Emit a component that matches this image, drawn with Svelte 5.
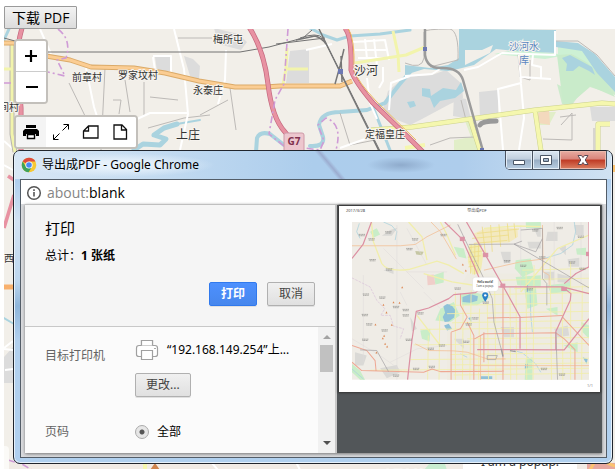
<script>
  const places = [
    [213, 43, '梅所屯'], [72, 81, '前章村'], [118, 79, '罗家坟村'], [193, 94, '永泰庄'],
    [365, 138, '定福皇庄'], [373, 478, '沙窝风力村'], [-1, 111, '间村'], [4, 262, '西小营']
  ];

  const yellowRows = [
    'M330 300 L744 292', 'M320 325 L744 318', 'M335 352 L744 345', 'M240 372 L744 366', 'M380 400 L744 396',
    'M220 418 L744 414', 'M330 447 L744 441', 'M210 462 L744 458', 'M330 478 L744 472', 'M90 494 L744 488',
    'M340 508 L744 503', 'M430 268 L744 262', 'M520 250 L744 244', 'M480 225 L744 219', 'M545 195 L740 190'
  ];
  const yellowColumns = [
    'M345 260 L345 522', 'M368 300 L366 522', 'M392 255 L388 522', 'M417 310 L414 522', 'M440 290 L444 522',
    'M462 240 L466 522', 'M508 245 L510 522', 'M526 240 L528 522', 'M556 200 L558 522', 'M580 180 L577 522',
    'M628 160 L632 522', 'M664 260 L666 522', 'M689 170 L689 522', 'M724 240 L722 522', 'M298 330 L296 522',
    'M264 390 L262 522'
  ];
  const districts = [
    'M410 85 L535 72 M395 100 L505 90 M400 115 L500 106 M425 65 L435 150 M450 60 L455 140 M475 58 L480 125 M500 55 L505 110 M520 55 L525 98',
    'M385 128 L425 122 M388 142 L430 137 M382 156 L420 152 M386 170 L415 167 M384 185 L412 181 M392 120 L390 205 M403 118 L402 208 M414 118 L412 200'
  ];
  const marks = [
    [66, 90], [95, 103], [145, 82], [225, 103], [208, 132], [98, 165], [147, 193], [78, 268], [127, 277],
    [168, 305], [75, 329], [88, 357], [134, 375], [76, 403], [197, 330], [241, 324], [310, 90], [352, 250],
    [272, 430], [305, 420], [206, 403], [405, 339], [385, 357], [378, 409], [228, 490], [275, 484], [168, 510],
    [610, 490], [664, 507], [548, 182], [568, 252], [657, 69], [720, 95], [605, 157], [694, 172], [725, 191],
    [584, 76], [500, 168], [436, 292], [197, 314]
  ];
  const peaks = [
    [186, 246], [160, 291], [178, 292], [139, 321], [155, 358], [106, 357], [132, 391], [128, 398],
    [135, 415], [141, 423], [109, 441], [130, 298], [367, 178], [376, 196]
  ];
</script>

<div class="app">
  <header><button class="download" type="button">下载 PDF</button></header>

  <main class="map">
    <svg class="tiles" viewBox="4 29 611 440" preserveAspectRatio="xMinYMin slice" aria-hidden="true">
      <rect x="4" y="29" width="611" height="440" fill="#f2efe9" />
      <rect x="4" y="462" width="611" height="8" fill="#f1ebe5" />
      <g fill="#dcdcdc">
        <path d="M214 28 L238 34 L247 42 L241 50 L218 44z M290 51 L309 49 V83 H286z M184 56 L193 59 L200 66 L199 79 L190 76z M155 57 H170 V71 H157z" />
        <path d="M405 77 L432 75 L446 70 L462 84 L463 98 L450 104 L422 119 L410 125 L392 118 L383 109 L388 91z M479 92 L498 90 V115 L480 118z M454 97 L466 99 L471 119 L453 116z M590 107 H615 V121 H592z M4 357 L13 347 V383 H4z" />
      </g>
      <path d="M557 84 L568 90 L598 62 L615 86 V95 L590 87 L577 98 L572 105 L562 104z" fill="#cdebcc" />
      <path d="M494 54 L518 49 L558 54 V47 L580 48 L600 66 L608 83 L586 64 L572 54 L545 59z" fill="#cdf1d4" />
      <path d="M465 121 L472 120 L480 150 H454 L454 140 L471 137z M538 112 H556 L549 125 H539z" fill="#e1eec8" />
      <path d="M557 55 L572 54 L586 62 L600 74 L615 97 L590 86 L577 98 L570 104 L563 104z" fill="#c9ebca" />
      <path d="M538 113 L549 109 L550 125 L538 123z" fill="#f3d9bd" />
      <g fill="#aad3df">
        <path d="M405 65 L430 68 L448 65 L459 58 V29 L556 30 L556 53 L516 51 L496 49 L474 65 L458 69 L448 71 L424 69 L405 75z" />
        <path d="M562 58 L570 55 L592 67 L595 75 L589 71 L579 66 L573 71 H566 L567 64z M422 88 L430 89 L431 96 L443 88 L456 90 L461 82 L464 91 L455 98 L440 101 L434 108 L430 98 L422 96z M407 102 L414 101 L416 106 L410 108z" />
        <path d="M555 41 L578 43 L595 54 L615 77 V92 L597 73 L582 51 L556 47z" />
      </g>
      <path d="M465 50 L482 50 L493 45 L490 53 L465 65z" fill="#f2efe9" />
      <g fill="none" stroke="#aad3df" stroke-linecap="round" stroke-linejoin="round">
        <path stroke-width="4" d="M256 152 L257 138 Q260 131 270 134 L284 145 L302 148 M310 146 Q325 147 323 137 L319 125 Q321 112 340 112 L367 110 L385 103 L399 85 L410 72" />
        <path stroke-width="3" d="M310 28 L323 35 L337 40 L350 36 L380 34 L410 30 M4 40 L9 29 M373 107 L390 150" />
        <path stroke-width="5" d="M134 150 L143 144 L160 145 L166 139 L154 135 L164 128 L177 124" />
        <path stroke-width="2" d="M177 124 L200 120 M4 318 L14 324" />
      </g>
      <g fill="none" stroke="#bdbab7" stroke-width="1">
        <path d="M69 83 L87 120 M105 68 L101 150 M113 100 L121 100 L119 114 M125 80 L130 112 M144 82 V116 M150 97 L178 100 M148 128 L184 118 L210 115 M200 115 L228 100 M230 88 L236 130 M340 113 L350 145 L375 140 M178 38 H212 M555 41 L578 41 L597 55 L615 76 M560 117 L576 115 M561 125 L572 113 L572 140 L543 139 M594 128 V150 M405 63 Q422 70 424 58 V32 Q424 29 450 29 Q459 31 458 60 L430 67 M430 145 L450 138 L475 137 M518 54 L520 77 L530 80 V60 M461 100 L466 120" />
      </g>
      <g fill="none" stroke="#fff" stroke-width="2" stroke-linejoin="round">
        <path d="M174 29 L184 69 L188 114 L180 150 M86 68 L94 107 L102 132 M153 56 H171 V72 M155 70 L153 57 M226 50 L225 80 L218 104 M40 29 L51 54 M135 120 L150 113 H187 M306 50 L332 44 M367 78 L370 103 L377 119 M353 42 L385 40 L389 60 M355 50 H386 M358 58 H386 M365 39 L367 59 M374 39 L377 66 M383 67 V81 L379 88 M389 110 L391 83 L410 76 M405 76 L432 74 L440 69 M464 70 L478 67 L502 53 L555 55 V31 M519 55 L521 83 L498 89 L503 150 M521 84 L524 118 L519 150 M521 77 L551 79 M533 54 L532 65 L541 67 V78 M340 148 L379 134 M4 165 L13 170 M4 348 L13 341 M211 462 L218 470 M296 462 L300 470" />
        <path d="M4 141 L13 149 M4 349 L13 350 M5 370 L13 369" />
      </g>
      <g fill="none" stroke-linejoin="round">
        <path stroke="#b8b5b1" stroke-width="5" d="M12 43 V134 L15 152" />
        <path stroke="#f2f4ac" stroke-width="3" d="M12 43 V134 L15 152 M4 69 H12 M287 48 L286 69 L283 84 M286 69 H308 M355 63 L406 55 L425 47 M393 31 L398 54 L399 72" />
        <path stroke="#cbd18d" stroke-width="5" d="M371 130 L412 127 L470 119 L535 110 L602 103 L615 104 M535 110 L541 151 M470 119 L480 150 M598 150 V124 H610" />
        <path stroke="#f5f7ae" stroke-width="4" d="M371 130 L412 127 L470 119 L535 110 L602 103 L615 104 M535 110 L541 151 M470 119 L480 150 M598 150 V124 H610 M405 148 L425 145 M145 462 V470" />
        <path stroke="#dbaa68" stroke-width="5" d="M4 43 H14 M46 56 L70 60 L91 67 L134 68 L165 73 L199 81 L235 87 H265 L280 86 H340 L352 81" />
        <path stroke="#fbcd93" stroke-width="3" d="M4 43 H14 M46 56 L70 60 L91 67 L134 68 L165 73 L199 81 L235 87 H265 L280 86 H340 L352 81" />
      </g>
      <g fill="none" stroke-linejoin="round">
        <path stroke="#727272" stroke-width="1" d="M4 38 L15 41 M46 52 H240 L269 47 L303 38 L312 30 M276 44 L325 38 M300 38 Q317 32 323 38 L341 73 L380 151" />
        <path stroke="#777" stroke-width="1.5" d="M319 29 L342 76 L379 151 M296 40 L315 36 Q322 38 326 44 M344 49 L340 66 L335 84 M341 56 L342 82 M339 70 L346 84" />
        <path stroke="#9b9b9b" stroke-width="2.5" d="M425 28 V55 Q427 68 440 68 Q459 67 463 80 L483 151" />
        <path stroke="#999" stroke-width="5" stroke-linecap="round" d="M480 125 Q482 121 496 121" />
      </g>
      <g fill="none" stroke-linejoin="round">
        <path stroke="#c4687e" stroke-width="5" d="M22 28 Q16 48 18 70 L21 108 V151 M249 27 Q264 50 268 84 T285 132 L300 151 M345 28 Q352 36 351 70 Q355 82 373 103 L413 142 L424 153" />
        <path stroke="#e892a2" stroke-width="3.6" d="M22 28 Q16 48 18 70 L21 108 V151 M249 27 Q264 50 268 84 T285 132 L300 151 M345 28 Q352 36 351 70 Q355 82 373 103 L413 142 L424 153 M4 228 L14 195 M8 176 L14 180" />
        <path stroke="#efb85f" stroke-width="1" d="M348 28 Q355 38 354 70 Q358 82 376 101 L416 140" />
        <path stroke="#f8b06c" stroke-width="5" d="M4 287 H14" />
        <path stroke="#cf9bd6" stroke-width="1.6" stroke-dasharray="7 3 2 3" d="M58 29 Q72 40 66 58 L57 60 L65 76 L48 72 M4 83 H15 M288 29 L284 84 L275 100 L269 134 L284 146 L304 148 L320 150 L324 141 L318 125 L326 118 Q343 124 336 150 M8 460 L22 464 L32 470" />
      </g>
      <path d="M150 470 L155 463 L160 470z" fill="#cf854f" />
      <path d="M429 464 H445 L447 470 H424z" fill="#c9ecd0" />
      <g fill="#6c78b3"><path d="M338 69 H343 V74 H338z M423 47 H427 V51 H423z M480 148 H484 V152 H480z" /></g>
      <rect x="284" y="133" width="20" height="20" rx="2" fill="#edc6ce" stroke="#ce9aa8" />
      <text class="shield" x="294" y="145">G7</text>
      {#each places as [x, y, name]}
        <text class="place" {x} {y}>{name}</text>
      {/each}
      <text class="town" x="176" y="139">上庄</text>
      <text class="town" x="354" y="75">沙河</text>
      <text class="lake" x="524" y="50">沙河水</text>
      <text class="lake" x="524" y="64">库</text>
      <path d="M587 463 H615 V470 H587z" fill="#e7a8a0" />
      <path d="M590 470 L594 463 M607 463 L615 466" stroke="#fbc370" stroke-width="3" />
      <rect x="-4" y="446" width="13" height="30" rx="4" fill="#fbfaf7" />
      <path d="M613 165 H615 V172 H613z" fill="#fbc370" />
    </svg>
    <p class="popup">I am a popup.</p>

    <div class="control zoom">
      <button type="button" aria-label="Zoom in"><svg viewBox="0 0 30 30"><path d="M15 9 V21 M9 15 H21" stroke="#000" stroke-width="2.2" /></svg></button>
      <button type="button" aria-label="Zoom out"><svg viewBox="0 0 30 30"><path d="M10 15 H22" stroke="#000" stroke-width="2.2" /></svg></button>
    </div>
    <div class="control sizes">
      <button type="button" aria-label="Print"><svg viewBox="0 0 30 30"><path d="M10 8 H20 V11 H10z M9 12 H21 L23 14 V19 H20 V17 H10 V19 H7 V14z" fill="#000" /><path d="M11.5 17.5 H18.5 V21.5 H11.5z" fill="#fff" stroke="#000" stroke-width="1.4" /></svg></button>
      <button type="button" aria-label="Current size"><svg viewBox="0 0 30 30"><path d="M7.5 22.5 L13.5 16.5 M16.5 13.5 L22.5 7.5 M17.5 7.5 H22.5 V12.5 M7.5 17.5 V22.5 H12.5" fill="none" stroke="#000" stroke-width="1" /></svg></button>
      <button type="button" aria-label="Landscape"><svg viewBox="0 0 30 30"><path d="M12.5 9 H22 V21 H7.5 V14z M12.5 9 V14 H7.5" fill="none" stroke="#111" stroke-width="1.3" /></svg></button>
      <button type="button" aria-label="Portrait"><svg viewBox="0 0 30 30"><path d="M8 8 H16 L20.5 12.5 V22 H8z M15.5 8 V13 H20.5" fill="none" stroke="#111" stroke-width="1.3" /></svg></button>
    </div>
  </main>

  <section class="window">
    <div class="titlebar">
      <svg class="chrome" viewBox="0 0 16 16" aria-hidden="true">
        <circle cx="8" cy="8" r="7.3" fill="#f6c834" />
        <path d="M8 8 L1.7 4.4 A7.3 7.3 0 0 1 14.4 4.5 H8z" fill="#dd4b3e" />
        <path d="M1.7 4.4 A7.3 7.3 0 0 0 7.6 15.3 L11 9.8 L8 8 L5 9.7z" fill="#3fa35b" />
        <circle cx="8" cy="8" r="3.6" fill="#fff" /><circle cx="8" cy="8" r="2.8" fill="#4a8af4" />
      </svg>
      <h1>导出成PDF - Google Chrome</h1>
      <div class="caption">
        <button type="button" aria-label="Minimize"><svg viewBox="0 0 16 14"><path d="M2.5 7.5 H13.5 V11.5 H2.5z" fill="#fff" stroke="#4b5666" /></svg></button>
        <button type="button" aria-label="Maximize"><svg viewBox="0 0 16 14"><path d="M2.5 2.5 H13.5 V11.5 H2.5z M5.5 5.5 H10.5 V8.5 H5.5z" fill="#fff" fill-rule="evenodd" stroke="#4b5666" /></svg></button>
        <button class="close" type="button" aria-label="Close"><svg viewBox="0 0 16 14"><path d="M3 2.5 H6.5 L8 4.5 L9.5 2.5 H13 L10.2 7 L13 11.5 H9.5 L8 9.5 L6.5 11.5 H3 L5.8 7z" fill="#fff" stroke="#5c4b55" /></svg></button>
      </div>
    </div>
    <div class="client">
      <div class="address">
        <svg viewBox="0 0 16 16" aria-hidden="true"><circle cx="8" cy="8" r="6.3" fill="none" stroke="#555" stroke-width="1.5" /><path d="M8 7 V11.5 M8 4.3 V6" stroke="#555" stroke-width="1.6" /></svg>
        <span><i>about:</i>blank</span>
      </div>
      <div class="print">
        <form class="options" onsubmit={(e) => e.preventDefault()}>
          <div class="summary">
            <h2>打印</h2>
            <p>总计：<b>1 张纸</b></p>
            <div class="actions">
              <button class="primary" type="submit">打印</button>
              <button class="plain" type="button">取消</button>
            </div>
          </div>
          <div class="settings">
            <div class="fields">
              <span class="label">目标打印机</span>
              <div>
                <div class="printer">
                  <svg viewBox="0 0 24 22" aria-hidden="true"><g fill="#fff" stroke="#a0a0a0" stroke-width="1.2"><path d="M6.5 8 V1.5 H17.5 V8" /><path d="M4 6.5 H20 Q22.5 6.5 22.5 9 V15.5 Q22.5 17.5 20 17.5 H4 Q1.5 17.5 1.5 15.5 V9 Q1.5 6.5 4 6.5z" /><path d="M6.5 6.5 V1.5 H17.5 V6.5 M6.5 11.5 H17.5 V20.5 H6.5z" /></g><path d="M19 9.5 H21" stroke="#aaa" /></svg>
                  <span>“192.168.149.254”上...</span>
                </div>
                <button class="plain" type="button">更改...</button>
              </div>
              <span class="label">页码</span>
              <label class="choice"><input type="radio" name="pages" checked />全部</label>
            </div>
            <div class="scrollbar" aria-hidden="true"><i class="up"></i><i class="thumb"></i><i class="down"></i></div>
          </div>
        </form>

        <div class="preview">
          <div class="sheet">
            <div class="running"><span>2017/3/28</span><span>导出成PDF</span><span></span></div>
            <svg viewBox="36 51 708 471" preserveAspectRatio="xMidYMid slice" aria-hidden="true">
              <rect x="36" y="51" width="708" height="471" fill="#efece6" />
              <path d="M380 205 H744 V522 H320 V330z" fill="#eeebe2" />
              <g fill="#dad9d6">
                <path d="M125 92 L150 75 L172 68 L155 92z M130 195 L160 188 V206z M480 140 H510 V172 L490 175z M620 80 H650 V108 H615z M700 60 H728 V90 H705z M655 130 L675 120 V150z M680 162 L715 158 V185 H683z M640 370 L680 360 L685 390 L650 395z M120 488 L170 478 L180 500 L140 518z M210 335 L230 370 L215 378z M45 440 L80 450 L70 480 H45z M575 60 L600 54 V95 H590z M480 365 H520 V395 H490z M340 400 H370 V430z M610 200 H640 V225 H610z M560 110 H600 V130 H565z M650 205 L690 215 V235 L650 230z" />
              </g>
              <g fill="#c9edc8">
                <path d="M340 125 L370 130 L378 160 L355 155z M280 210 L310 200 V232 L285 238z M525 165 L570 160 L580 200 L545 215 L522 190z M555 52 L600 51 V68 L556 70z M525 215 L600 210 V245 L530 240z M620 240 L690 232 V258 L630 265z M300 310 L340 290 L358 330 L330 350 L285 345z M360 268 L400 260 L450 275 L410 300 L365 300z M240 375 L270 370 L268 408 L245 400z M705 130 L735 128 V150 L708 148z M550 245 L585 240 L590 300 L560 310z M36 475 L60 495 L75 522 H60 L36 500z M615 310 L650 305 V330z M720 350 L744 360 V400 L725 380z M668 420 L710 410 V440z M90 80 L110 70 L120 88 L100 98z M555 460 L575 455 V522 H552z" />
              </g>
              <path d="M260 210 L280 208 L285 238 L262 240z" fill="#f0cec9" />
              <path d="M225 138 L250 140 L245 150 L228 148z" fill="#c6c7a4" />
              <path d="M385 118 L415 118 L428 150 L420 205 L395 208 L382 170z" fill="#f1ecb4" />
              <path d="M400 85 L440 68 L530 70 L532 95 L505 112 L410 115z" fill="#f3e9c0" />
              <g fill="#8fc1d8">
                <path d="M309 303 L320 296 L333 299 L345 315 L341 336 L325 348 L313 350 L307 335 L314 322z M366 275 L390 266 L412 273 L410 286 L390 292 L366 290z M383 338 L393 335 L392 350z M311 360 L325 355 L335 370 L320 375z M553 475 L562 473 L560 490 H552z M725 455 L740 460 L737 475z M555 238 L562 238 V260 H556z M420 512 H455 V520 H420z" />
              </g>
              <g fill="none" stroke="#aed3dd" stroke-width="2.4">
                <path d="M130 51 L155 62 L170 80 L165 105 M58 55 L50 80 L60 100 M36 490 L70 520 M520 435 L545 442 L585 475 L600 500 M568 250 L570 330 L575 380 M360 445 L380 455 M700 51 L704 80 L695 120 L660 145 L610 160" />
              </g>
              <g fill="none" stroke="#dedadb" stroke-width="1.5">
                <path d="M170 60 V522 M130 130 L250 250 M200 70 L260 180 M70 210 V470 M200 200 H320 M180 260 L200 300 M250 260 L300 310 M150 470 L230 430 L320 420 M36 400 L120 450 L190 500 M540 60 V260 M640 51 V250 M720 51 V240" />
              </g>
              <g fill="none" stroke="#f1eeac" stroke-width="2.6">
                {#each yellowRows as d}<path {d} />{/each}
                {#each yellowColumns as d}<path {d} />{/each}
                <path stroke-width="4" d="M94 51 L100 110 L125 175 Q140 200 205 193 L290 168 L325 180 L370 205 M205 51 L245 95 L260 165 M300 51 L320 90 L345 150 M250 205 L335 230 L400 240 M540 260 L650 130 L744 90 M230 330 L300 420 M430 70 L530 63 L600 65" />
              </g>
              <g fill="none" stroke="#eddc86" stroke-width="2.4">{#each districts as d}<path {d} />{/each}</g>
              <g fill="none" stroke="#f2c49e" stroke-width="2.6" stroke-linejoin="round">
                <path d="M36 122 H180 L225 118 L260 95 M272 51 L300 80 L348 162 M260 95 L330 60 M605 60 L607 200 L625 210 V240 M430 195 L540 170 L620 160 M225 415 L265 435 L340 436 L380 440 L440 460 H495 M400 480 H744 M420 390 V522" />
              </g>
              <g fill="none" stroke="#eea894" stroke-width="3" stroke-linejoin="round">
                <path d="M36 420 L80 435 L105 465 L108 497 M36 470 L65 495 L250 500 L275 490 L300 498 L490 497 M332 380 V522 M332 380 L360 370 L380 335 L360 300 V265 M380 350 L400 390 V522 M430 380 V470 M487 242 V522 M402 400 L430 385 L645 382 M440 338 L540 336 L665 330 M645 382 L670 400 L702 432 V522 M665 335 L744 420" />
              </g>
              <g fill="none" stroke="#dc8fa2" stroke-width="3.6" stroke-linejoin="round">
                <path d="M94 51 L69 118 L36 160 M313 51 L365 102 L400 180 L425 240 M378 51 L435 150 L487 242 L538 334 V430 M202 522 L215 405 L228 318 L265 308 L325 280 L340 268 L405 262 L425 245 L665 245 L744 265 M665 245 L690 265 L688 285 L645 378 V432 M410 432 L670 433 L744 340 M744 51 V185 L705 205 L670 235" />
              </g>
              <g fill="none" stroke="#a09ea0" stroke-width="2" stroke-linejoin="round">
                <path d="M352 58 L382 121 L430 220 L455 280 L460 350 L487 450 M385 118 L520 117 L744 248 M520 117 L544 108 M520 117 L585 140 L605 100 V70 L540 75 M605 100 V220 L618 235 V300 M60 433 L110 435 L145 498 M440 450 H470 L465 462 H440z M645 380 L650 522" />
                <path stroke-width="4" d="M482 430 L487 453 M508 435 L525 438" />
              </g>
              <path d="M36 218 L90 245 L110 285 L134 310 L122 330 L150 330 L160 362 L190 370 L180 400" fill="none" stroke="#d9c2d9" stroke-width="2" stroke-dasharray="8 3" />
              {#each peaks as [x, y]}<path d={`M${x - 3} ${y + 3} l3 -6 l3 6z`} fill="#dc8551" />{/each}
              {#each marks as [x, y]}<path d={`M${x - 10} ${y - 2} h20 M${x - 9} ${y + 2} h17`} stroke="#868583" stroke-width="2" stroke-dasharray="4 1" />{/each}
              <g fill="#dc93a6"><rect x="427" y="143" width="16" height="13" /><rect x="358" y="95" width="15" height="13" /><rect x="479" y="235" width="15" height="12" /><rect x="661" y="245" width="17" height="12" /><rect x="735" y="140" width="9" height="13" /></g>
              <path d="M404 216 H464 Q473 216 473 225 V250 Q473 258 464 258 H442 L434 267 L426 258 H404 Q396 258 396 250 V225 Q396 216 404 216z" fill="#fff" stroke="#d1d0ce" />
              <text class="mini bold" x="410" y="234">Hello world!</text>
              <text class="mini" x="408" y="245">I am a popup.</text>
              <path d="M434 290 Q425 276 425 270 A9 9 0 0 1 443 270 Q443 276 434 290z" fill="#2a81c8" /><circle cx="434" cy="270" r="3.5" fill="#fff" />
            </svg>
            <span class="folio">1/1</span>
          </div>
        </div>
      </div>
    </div>
  </section>
</div>

<style>
  :global(body) { margin: 0; background: #fff; }
  .app {
    position: relative; display: flex; flex-direction: column; height: 100vh; overflow: hidden;
    font-family: "Noto Sans", "Noto Sans CJK SC", sans-serif; color: #000; font-size: 12px;
  }
  button { font-family: inherit; margin: 0; padding: 0; box-sizing: border-box; }
  h1, h2, p { margin: 0; font-weight: 400; }
  header { box-sizing: border-box; padding: 6px 0 0 4px; height: 29px; }
  .download {
    display: block; height: 23px; padding: 0 7px; border: 1px solid #9a9a9a; border-radius: 1px;
    background: linear-gradient(#f3f3f3, #dcdcdc); font-size: 14px; line-height: 20px;
    font-family: "Open Sans", "Noto Sans CJK SC", sans-serif;
  }
  .map { position: relative; flex: 1; min-height: 0; margin-left: 4px; overflow: hidden; }
  .tiles { display: block; width: 100%; height: 100%; }
  .tiles text { font-family: "Noto Sans CJK SC", sans-serif; paint-order: stroke; stroke: #f6f3ee; stroke-width: 2px; fill: #333; }
  .tiles .place { font-size: 10px; }
  .tiles .town { font-size: 12px; }
  .tiles .lake { font-size: 10px; fill: #5a86c0; text-anchor: middle; }
  .tiles .shield { font: 700 10px "Noto Sans", sans-serif; fill: #80304d; stroke: none; text-anchor: middle; }
  .popup {
    position: absolute; right: 38px; bottom: 0; width: 114px; height: 14px; background: #fff;
    text-align: center; line-height: 14px; font-size: 12px; color: #333;
  }
  .control {
    position: absolute; left: 10px; display: flex; overflow: hidden; background: #fff;
    border: 2px solid #c3c0bb; border-radius: 4px;
  }
  .control button { width: 30px; height: 30px; border: 0; background: #fff; }
  .control svg { display: block; width: 30px; height: 30px; }
  .zoom { top: 10px; flex-direction: column; }
  .zoom button:first-child { height: 31px; border-bottom: 1px solid #ccc; }
  .sizes { top: 86px; }
  .sizes button:first-child { background: #f4f4f4; }

  .window {
    position: absolute; left: 13px; right: 2px; top: 150px; bottom: 5px; box-sizing: border-box;
    display: flex; flex-direction: column; padding: 0 5px 5px 6px; overflow: hidden;
    border: 1px solid #20252d; border-radius: 7px; box-shadow: inset 0 0 0 1px #e6f1fb;
    background: linear-gradient(#c9dced 0, #b0cfee 30px, #d3e3f3 70px, #bdd6ee 130px, #8fb6db 155px, #b2d0ee 190px, #b0d0ef 100%);
  }
  .titlebar {
    display: flex; flex: none; align-items: flex-start; height: 28px; margin: 0 -4px 0 -5px; padding: 0 4px 0 5px;
    background:
      radial-gradient(ellipse 95px 12px at 105px 14px, #e6f1fb 30%, transparent),
      radial-gradient(ellipse 34px 8px at 386px 14px, #8fabcc, transparent),
      linear-gradient(50deg, transparent 48%, #9cadd0 53%, transparent 58%) 280px 0 / 65px 28px no-repeat,
      linear-gradient(90deg, #d8e7f5, #accdec 50%, #aecdec 75%, #d0e2f2);
  }
  .chrome { width: 16px; height: 16px; margin: 6px 5px 0 1px; }
  h1 { flex: 1; font: 12px/28px "Noto Sans", "Noto Sans CJK SC", sans-serif; white-space: nowrap; }
  .caption { display: flex; overflow: hidden; border: 1px solid #4a5361; border-top: 0; border-radius: 0 0 5px 5px; }
  .caption button {
    display: grid; place-items: center; width: 27px; height: 18px; border: 0; border-right: 1px solid #4a5361;
    background: linear-gradient(#dce7f2, #c0cedd 45%, #98adc4 50%, #b9cee2);
    box-shadow: inset 0 0 0 1px #e3edf7;
  }
  .caption .close { width: 46px; border-right: 0; background: linear-gradient(#e7aca2, #d9847a 45%, #bf3a24 50%, #dc8163); box-shadow: inset 0 0 0 1px #eab9ac; }
  .caption svg { width: 16px; height: 14px; }
  .client {
    flex: 1; display: flex; flex-direction: column; min-height: 0; padding: 0 4px 4px;
    border: 1px solid #535d68; background: #d9dadd;
  }
  .address {
    display: flex; flex: none; align-items: center; gap: 5px; height: 24px; margin: 0 -4px; padding: 2px 0 0 5px;
    box-sizing: border-box; background: #fff;
    font: 14px/22px "Open Sans", "Noto Sans CJK SC", sans-serif;
  }
  .address svg { width: 16px; height: 16px; }
  .address i { font-style: normal; color: #858585; }
  .print { flex: 1; display: flex; min-height: 0; border-top: 1px solid #c0c0c0; box-shadow: 0 1px 3px #777; background: #fbfbfb; }
  .options { display: flex; flex: 0 0 310px; flex-direction: column; min-width: 0; border-right: 2px solid #c8c8c8; }
  .summary { flex: none; padding: 11px 20px 20px; border-bottom: 1px solid #c8c8c8; background: #f5f5f5; }
  h2 { font-size: 15px; line-height: 24px; }
  .summary p { padding-top: 6px; line-height: 20px; }
  .summary b { font-weight: 700; }
  .actions { display: flex; justify-content: flex-end; gap: 10px; padding-top: 16px; }
  .primary, .plain {
    height: 24px; min-width: 48px; padding: 0 10px; border: 1px solid #b0b0b0; border-radius: 2px;
    background: linear-gradient(#f0f0f0, #e0e0e0); color: #444; font-size: 12px; line-height: 20px;
    box-shadow: 0 1px 0 #e0e0e0;
  }
  .primary { border-color: #3079ed; background: linear-gradient(#4d90fe, #4787ed); color: #fff; font-weight: 700; }
  .settings { display: flex; flex: 1; min-height: 0; overflow: hidden; }
  .fields {
    flex: 1; display: grid; grid-template-columns: 90px 1fr; align-content: start; row-gap: 25px;
    padding: 12px 0 0 20px; line-height: 20px;
  }
  .label { color: #646464; }
  .label:first-child { padding-top: 7px; }
  .printer { display: flex; align-items: center; gap: 8px; height: 22px; margin-bottom: 12px; white-space: nowrap; }
  .printer svg { width: 24px; height: 22px; }
  .choice { display: flex; align-items: center; gap: 8px; }
  .choice input {
    appearance: none; width: 14px; height: 14px; margin: 0; border: 1px solid #aaa; border-radius: 50%;
    background: radial-gradient(circle, #555 2px, #e6e6e6 3px);
  }
  .scrollbar { flex: none; width: 17px; display: flex; flex-direction: column; align-items: center; padding: 8px 0; box-sizing: border-box; background: #f1f1f1; }
  .up, .down { border: 4px solid transparent; border-top: 0; border-bottom: 4px solid #a3a3a3; }
  .down { margin-top: auto; border-bottom: 0; border-top: 4px solid #505050; }
  .thumb { width: 13px; height: 27px; margin-top: 6px; background: #c1c1c1; }
  .preview { flex: 1; min-width: 0; padding: 1px 2px; background: #525659; }
  .sheet { display: flex; flex-direction: column; padding: 0 11px 0 13px; background: #fff; box-shadow: 0 0 2px 1px #333; }
  .sheet svg { display: block; width: 100%; }
  .running { display: flex; justify-content: space-between; height: 16px; margin-left: -6px; font-size: 4px; line-height: 10px; color: #444; }
  .folio { height: 12px; margin-right: -4px; text-align: right; font-size: 4px; line-height: 12px; color: #888; }
  .mini { font: 8px "Noto Sans", sans-serif; fill: #444; }
  .bold { font-weight: 700; }
</style>
